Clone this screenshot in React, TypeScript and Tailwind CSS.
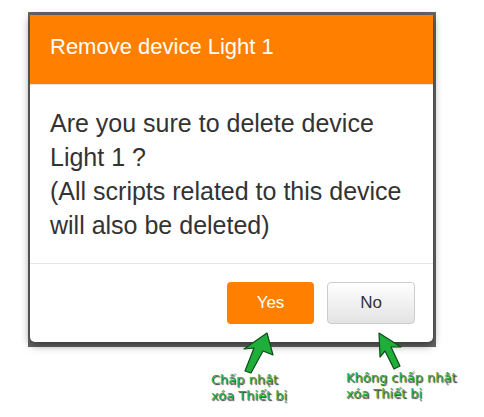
export default function App() {
  return (
    <div className="relative h-[417px] w-[484px] overflow-hidden bg-white font-['Liberation_Sans',Arial,sans-serif]">
      {/* dimmed backdrop behind the dialog */}
      <div className="ml-[28px] mt-[12px] w-[408px] bg-[#666666] pb-[5px] pl-[2px] pr-[3px] pt-[3px]">
        <div className="flex w-[403px] flex-col overflow-hidden rounded-b-[5px] bg-white shadow-[0_3px_8px_rgba(0,0,0,0.5)]">
          <div className="h-[70px] border-b border-[#e5e5e5] bg-[#ff8000] pl-[20px] pt-[19px]">
            <h2 className="text-[22px] leading-[26px] text-white">Remove device Light 1</h2>
          </div>
          <div className="px-[20px] pb-[21px] pt-[21px] text-[25px] leading-[34px] text-[#333333]">
            <p>Are you sure to delete device Light 1 ?</p>
            <p>(All scripts related to this device will also be deleted)</p>
          </div>
          <div className="flex justify-end gap-[13px] border-t border-[#e5e5e5] px-[18px] pb-[18px] pt-[18px]">
            <button className="h-[42px] w-[87px] rounded-[4px] bg-[#ff8000] text-[17px] text-white">Yes</button>
            <button className="h-[42px] w-[88px] rounded-[4px] border border-[#cccccc] bg-gradient-to-b from-white to-[#e3e3e3] text-[17px] text-[#333333]">
              No
            </button>
          </div>
        </div>
      </div>

      {/* annotation arrows */}
      <svg className="absolute left-0 top-0" width="484" height="417" viewBox="0 0 484 417">
        <polygon
          points="267,333 273,355 263,351 251,373 245,371 254,348 244,349"
          fill="#1fae3a"
          stroke="#0d4d18"
          strokeWidth="1.2"
          strokeLinejoin="round"
        />
        <polygon
          points="379,333 401,347 391,347 400,366 394,369 385,351 380,357"
          fill="#1fae3a"
          stroke="#0d4d18"
          strokeWidth="1.2"
          strokeLinejoin="round"
        />
      </svg>

      <div className="absolute left-[211px] top-[372px] font-['DejaVu_Sans',sans-serif] text-[13px] leading-[16px] text-[#21b03a] [text-shadow:1px_1px_1px_#333,0_0_1px_#fff]">
        <div>Chấp nhật</div>
        <div>xóa Thiết bị</div>
      </div>
      <div className="absolute left-[346px] top-[370px] font-['DejaVu_Sans',sans-serif] text-[13px] leading-[16px] text-[#21b03a] [text-shadow:1px_1px_1px_#333,0_0_1px_#fff]">
        <div>Không chấp nhật</div>
        <div>xóa Thiết bị</div>
      </div>
    </div>
  );
}
